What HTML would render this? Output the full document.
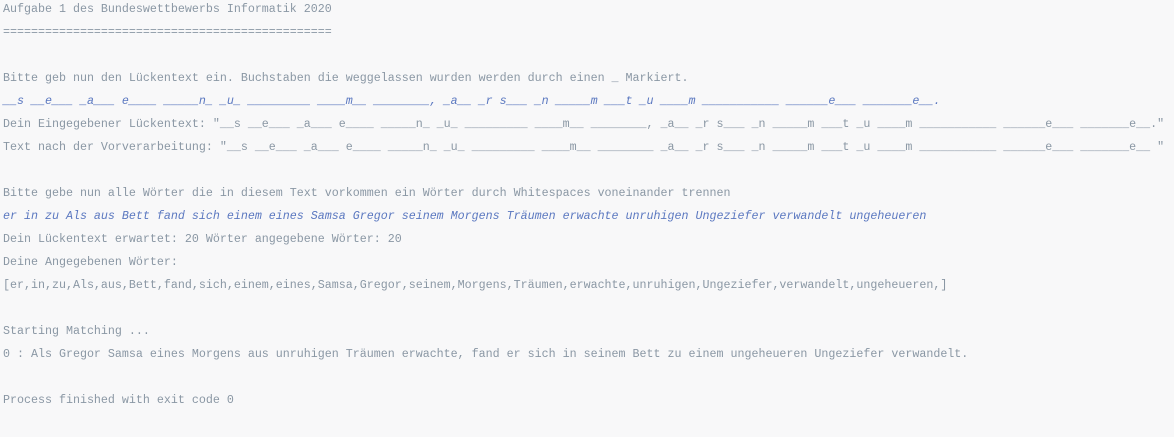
<!DOCTYPE html>
<html><head><meta charset="utf-8"><style>
html,body{margin:0;padding:0;background:#f8f8f9;width:1174px;height:437px;overflow:hidden}
pre{margin:0;position:absolute;left:3px;top:-2px;font-family:"Liberation Mono","DejaVu Sans Mono",monospace;font-size:11.67px;line-height:23px;color:#8a97a4;white-space:pre}
i{color:#5b78c0;font-style:italic}
</style></head><body><pre>Aufgabe 1 des Bundeswettbewerbs Informatik 2020
===============================================

Bitte geb nun den Lückentext ein. Buchstaben die weggelassen wurden werden durch einen _ Markiert.
<i>__s __e___ _a___ e____ _____n_ _u_ _________ ____m__ ________, _a__ _r s___ _n _____m ___t _u ____m ___________ ______e___ _______e__.</i>
Dein Eingegebener Lückentext: "__s __e___ _a___ e____ _____n_ _u_ _________ ____m__ ________, _a__ _r s___ _n _____m ___t _u ____m ___________ ______e___ _______e__."
Text nach der Vorverarbeitung: "__s __e___ _a___ e____ _____n_ _u_ _________ ____m__ ________ _a__ _r s___ _n _____m ___t _u ____m ___________ ______e___ _______e__ "

Bitte gebe nun alle Wörter die in diesem Text vorkommen ein Wörter durch Whitespaces voneinander trennen
<i>er in zu Als aus Bett fand sich einem eines Samsa Gregor seinem Morgens Träumen erwachte unruhigen Ungeziefer verwandelt ungeheueren</i>
Dein Lückentext erwartet: 20 Wörter angegebene Wörter: 20
Deine Angegebenen Wörter:
[er,in,zu,Als,aus,Bett,fand,sich,einem,eines,Samsa,Gregor,seinem,Morgens,Träumen,erwachte,unruhigen,Ungeziefer,verwandelt,ungeheueren,]

Starting Matching ...
0 : Als Gregor Samsa eines Morgens aus unruhigen Träumen erwachte, fand er sich in seinem Bett zu einem ungeheueren Ungeziefer verwandelt.

Process finished with exit code 0</pre></body></html>
